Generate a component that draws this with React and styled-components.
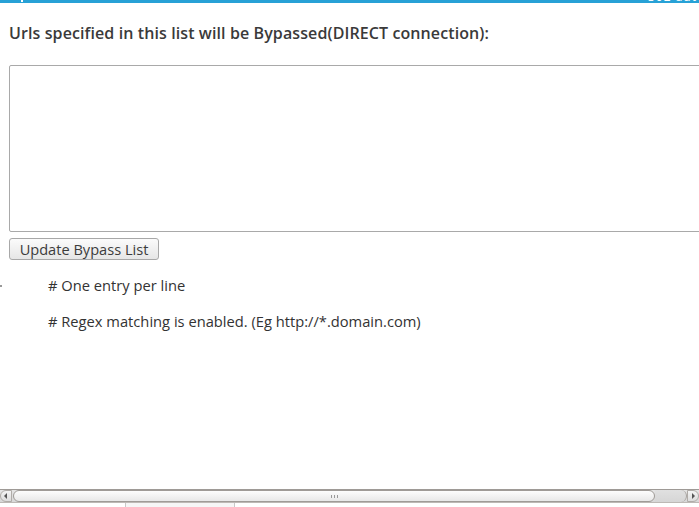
import React from "react";
import styled, { createGlobalStyle } from "styled-components";

const Global = createGlobalStyle`
  html, body { margin: 0; padding: 0; overflow: hidden; background: #fff; }
  #root { width: 699px; height: 507px; }
`;

const Page = styled.div`
  width: 699px;
  height: 507px;
  display: flex;
  flex-direction: column;
  overflow: hidden;
  font-family: "Open Sans", "DejaVu Sans", sans-serif;
  color: #333;
`;

const TopBar = styled.div`
  height: 3px;
  background: #27a1d6;
  position: relative;
  overflow: hidden;
  flex: none;
`;

const TopBarText = styled.span`
  position: absolute;
  right: 2px;
  top: -9px;
  font-size: 12px;
  line-height: 12px;
  color: #fff;
  letter-spacing: 1px;
`;

const TopBarMark = styled.span`
  position: absolute;
  left: 21px;
  top: 0;
  width: 2px;
  height: 2px;
  background: #fff;
`;

const Main = styled.div`
  flex: 1;
  min-height: 0;
  display: flex;
  flex-direction: column;
  padding-left: 9px;
  overflow: hidden;
  position: relative;
`;

const Heading = styled.h2`
  margin: 20px 0 0 0;
  font-size: 16px;
  line-height: 20px;
  font-weight: 600;
  letter-spacing: 0.1px;
  color: #3a3a3a;
`;

const ListBox = styled.textarea`
  margin-top: 22px;
  width: 720px;
  height: 167px;
  box-sizing: border-box;
  border: 1px solid #a9a9a9;
  border-radius: 2px;
  resize: none;
  background: #fff;
  outline: none;
  flex: none;
`;

const Button = styled.button`
  margin-top: 6px;
  align-self: flex-start;
  width: 150px;
  height: 22px;
  box-sizing: border-box;
  border: 1px solid #a8a8a8;
  border-radius: 3px;
  background: linear-gradient(#fbfbfb, #e6e6e6);
  font-family: "Open Sans", "DejaVu Sans", sans-serif;
  font-size: 14.6px;
  color: #3c3c3c;
  padding: 0 0 1px 0;
  line-height: 18px;
`;

const Notes = styled.div`
  display: flex;
  flex-direction: column;
  gap: 17px;
  margin-top: 16px;
  padding-left: 39px;
  position: relative;
`;

const Note = styled.div`
  font-size: 14.7px;
  line-height: 19px;
  color: #333;
`;

const Dot = styled.span`
  position: absolute;
  left: -9px;
  top: 9px;
  width: 2px;
  height: 2px;
  background: #999;
`;

const ScrollBar = styled.div`
  flex: none;
  height: 14px;
  display: flex;
  align-items: stretch;
  background: linear-gradient(#e4e4e4, #d8d8d8);
  border-top: 1px solid #9e9a96;
  border-bottom: 1px solid #bdb9b5;
  box-sizing: border-box;
`;

const Arrow = styled.div`
  width: 12px;
  flex: none;
  display: flex;
  align-items: center;
  justify-content: center;
  background: linear-gradient(#f4f4f4, #dcdcdc);
  border-radius: ${(p) => (p.$left ? "6px 0 0 6px" : "0 6px 6px 0")};
  border: 1px solid #b0aca8;
  box-sizing: border-box;
`;

const Thumb = styled.div`
  flex: none;
  width: 642px;
  margin-left: 1px;
  border: 1px solid #9f9b97;
  border-radius: 7px;
  box-sizing: border-box;
  background: linear-gradient(#fdfdfd, #e8e8e8);
  display: flex;
  align-items: center;
  justify-content: center;
`;

const Grip = styled.span`
  width: 7px;
  height: 3px;
  border-left: 1px solid #999;
  border-right: 1px solid #999;
  position: relative;
  box-sizing: border-box;
  &::after {
    content: "";
    position: absolute;
    left: 2px;
    top: 0;
    width: 1px;
    height: 3px;
    background: #999;
  }
`;

const Track = styled.div`
  flex: 1;
  border-radius: 0 6px 6px 0;
  border-right: 1px solid #a8a4a0;
  background: linear-gradient(#e0e0e0, #d6d6d6);
`;

const Footer = styled.div`
  flex: none;
  height: 4px;
  display: flex;
`;

const FooterCell = styled.div`
  width: ${(p) => p.$w}px;
  flex: none;
  box-sizing: border-box;
  border-right: ${(p) => (p.$line ? "1px solid #c8c8c8" : "none")};
  background: ${(p) => (p.$shade ? "#f6f6f6" : "transparent")};
`;

export default function App() {
  return (
    <>
      <Global />
      <Page>
        <TopBar>
          <TopBarMark />
          <TopBarText>302 aut</TopBarText>
        </TopBar>
        <Main>
          <Heading>Urls specified in this list will be Bypassed(DIRECT connection):</Heading>
          <ListBox />
          <Button>Update Bypass List</Button>
          <Notes>
            <Dot />
            <Note># One entry per line</Note>
            <Note># Regex matching is enabled. (Eg http://*.domain.com)</Note>
          </Notes>
        </Main>
        <ScrollBar>
          <Arrow $left>
            <svg width="4" height="6" viewBox="0 0 4 6"><path d="M3 0 L0 3 L3 6 Z" fill="#555" /></svg>
          </Arrow>
          <Thumb>
            <Grip />
          </Thumb>
          <Track />
          <Arrow>
            <svg width="4" height="6" viewBox="0 0 4 6"><path d="M1 0 L4 3 L1 6 Z" fill="#555" /></svg>
          </Arrow>
        </ScrollBar>
        <Footer>
          <FooterCell $w={126} $line />
          <FooterCell $w={109} $line $shade />
        </Footer>
      </Page>
    </>
  );
}
